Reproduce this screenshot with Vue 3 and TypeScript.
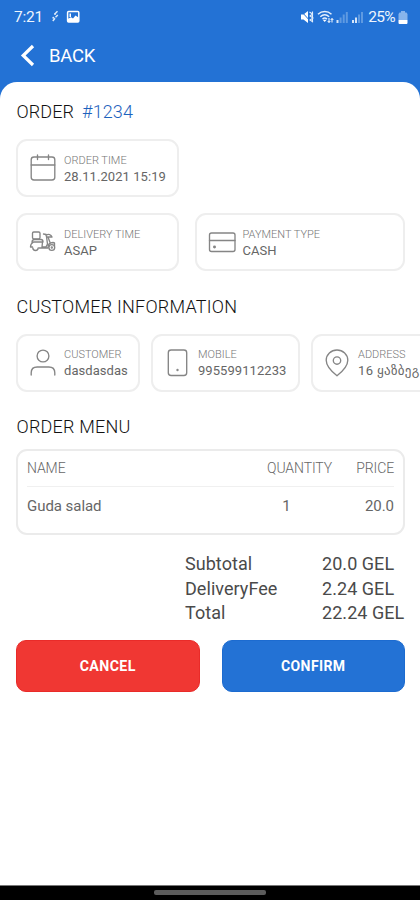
<script setup lang="ts">
interface Info {
  icon: 'calendar' | 'scooter' | 'card' | 'user' | 'phone' | 'pin'
  label: string
  value: string
  cls: string
}

const rows: { cls: string; items: Info[] }[] = [
  {
    cls: 'row-time',
    items: [{ icon: 'calendar', label: 'ORDER TIME', value: '28.11.2021 15:19', cls: 'w-time' }],
  },
  {
    cls: 'row-delivery',
    items: [
      { icon: 'scooter', label: 'DELIVERY TIME', value: 'ASAP', cls: 'w-time asap' },
      { icon: 'card', label: 'PAYMENT TYPE', value: 'CASH', cls: 'w-pay' },
    ],
  },
]

const customer: Info[] = [
  { icon: 'user', label: 'CUSTOMER', value: 'dasdasdas', cls: 'w-customer' },
  { icon: 'phone', label: 'MOBILE', value: '995599112233', cls: 'w-mobile' },
  { icon: 'pin', label: 'ADDRESS', value: '16 ყაზბეგ', cls: 'w-address' },
]

const sections = [
  { title: '', rows },
  { title: 'CUSTOMER INFORMATION', rows: [{ cls: 'row-customer', items: customer }] },
]

const totals = [
  { label: 'Subtotal', value: '20.0 GEL' },
  { label: 'DeliveryFee', value: '2.24 GEL' },
  { label: 'Total', value: '22.24 GEL' },
]
</script>

<template>
  <div class="screen">
    <header class="top">
      <div class="status">
        <span class="clock">7:21</span>
        <svg class="st-left" width="30" height="16" viewBox="0 0 30 16" fill="none">
          <path d="M7.500 2.300L5 4.800M7.800 6L5.500 8.300M5 9.300L2.800 12" stroke="#dceafa" stroke-width="1.500" />
          <circle cx="3.300" cy="8.800" r="1" fill="#dceafa" />
          <circle cx="5" cy="5" r="1" fill="#dceafa" />
          <rect x="17.600" y="2.600" width="11.200" height="10.400" rx="1" stroke="#fff" stroke-width="1.500" />
          <path d="M18 13V9.800l3-1.600 2 1.200 2.500-3 3 2V13zM19.500 4.500H21v3.500h-1.500z" fill="#fff" />
        </svg>
        <span class="grow"></span>
        <svg class="st-right" width="64" height="16" viewBox="0 0 64 16" fill="none">
          <path d="M1 5.500h2.500L8 2v12L3.500 10.500H1z" fill="#fff" />
          <path d="M1 2l11 12" stroke="#2372d5" stroke-width="1" />
          <path d="M9.500 3l3 2-2.500 2 3 2-3 2 3 2M12.500 2.500v11" stroke="#e1edfb" stroke-width="1.100" />
          <path d="M18 5.200c4-3.500 9.500-3.500 13.500 0M20.300 7.700c2.700-2.300 6.200-2.300 8.900 0M22.500 10c1.500-1.200 3-1.200 4.500 0" stroke="#e6f0fc" stroke-width="1.500" />
          <path d="M24.700 13l-2-2.300h4z" fill="#fff" />
          <path d="M29 9v4.500M27.700 12l1.300 1.500 1.300-1.500M32 13.500V9.500M30.700 11l1.300-1.500 1.300 1.500" stroke="#fff" stroke-width="1" />
          <path d="M36.500 11h2v3h-2zM52 11h2v3h-2zM55 8.500h2V14h-2z" fill="#d5e5f9" />
          <path d="M39.600 8.500h2V14h-2zM42.700 5.500h2V14h-2zM45.800 3h2v11h-2zM58 5.500h2V14h-2zM61 3h2v11h-2z" fill="#5f9ae1" />
        </svg>
        <span class="pct">25%</span>
        <svg class="battery" width="10" height="15" viewBox="0 0 10 15">
          <path d="M3 1h4v1.500h1.500L9.500 4v6h-9V4l1-1.500H3z" fill="#87b4eb" />
          <path d="M.5 10h9v3.300l-.7.700H1.200l-.7-.7z" fill="#fff" />
        </svg>
      </div>
      <div class="back">
        <svg width="16" height="24" viewBox="0 0 16 24" fill="none">
          <path d="M13 2L3.200 11.500l9.800 9.500" stroke="#fff" stroke-width="3.200" />
        </svg>
        <span>BACK</span>
      </div>
    </header>

    <main class="sheet">
      <h2 class="title first">ORDER <span class="num">#1234</span></h2>

      <section v-for="s in sections" :key="s.title">
        <h2 v-if="s.title" class="title cust">{{ s.title }}</h2>
        <div v-for="r in s.rows" :key="r.cls" class="row" :class="r.cls">
          <div v-for="i in r.items" :key="i.label" class="card" :class="i.cls">
            <svg class="icon" width="28" height="30" viewBox="0 0 28 30" fill="none" stroke="#858585" stroke-width="1.350" stroke-linecap="round" stroke-linejoin="round">
              <g v-if="i.icon === 'calendar'">
                <rect x="2.200" y="4" width="23.600" height="23" rx="2.800" />
                <path d="M2.200 12h23.600M8.500 2v4.500M19.500 2v4.500" />
              </g>
              <g v-else-if="i.icon === 'scooter'">
                <rect x="3.500" y="5" width="7.500" height="6.800" rx="1.300" />
                <path d="M3 15.500c0-1.800 1-3 2.500-3h6.500c1.500 0 2 1 2 2.500H4.500M13.500 15l-.5 5h4l1.500-3-1.300-9.500-2.700-.500M17 8.500c2.500-2 5-1 6 1.500h-4.500M19 10l2 5.500M4 15.500c-2 1-2.500 2.500-2.500 4.500h2M10 21h9c0-3.500 2-5.500 5-5.500l1.500.5v3" />
                <path d="M3.800 20.800a2.700 2.700 0 0 0 5.400 0" />
                <circle cx="22.800" cy="20.500" r="2.900" />
                <circle cx="22.800" cy="20.500" r=".5" />
              </g>
              <g v-else-if="i.icon === 'card'">
                <rect x="1.500" y="6" width="25.500" height="18.500" rx="2" />
                <path d="M1.500 13.500H27" />
                <circle cx="6.500" cy="20" r=".8" fill="#858585" />
              </g>
              <g v-else-if="i.icon === 'user'">
                <circle cx="14" cy="8" r="5.900" />
                <path d="M2.200 27v-2.200c0-3.500 2.300-5.800 6-5.800h11.600c3.700 0 6 2.300 6 5.800V27" />
              </g>
              <g v-else-if="i.icon === 'phone'">
                <rect x="4.300" y="2" width="18.400" height="25.500" rx="2.800" />
                <circle cx="13.500" cy="22" r=".5" fill="#858585" />
              </g>
              <g v-else>
                <path d="M13 27.800C7 23 2.200 18 2.200 12.200a10.800 10.200 0 0 1 21.600 0C23.800 18 19 23 13 27.800z" />
                <circle cx="13" cy="12.500" r="3.700" />
              </g>
            </svg>
            <div class="txt">
              <span class="label">{{ i.label }}</span>
              <span class="value">{{ i.value }}</span>
            </div>
          </div>
        </div>
      </section>

      <h2 class="title menu">ORDER MENU</h2>
      <div class="table">
        <div class="tr head"><span>NAME</span><span class="q">QUANTITY</span><span class="p">PRICE</span></div>
        <div class="tr body"><span>Guda salad</span><span class="q">1</span><span class="p">20.0</span></div>
      </div>

      <div class="totals">
        <div v-for="t in totals" :key="t.label" class="total">
          <span>{{ t.label }}</span><span>{{ t.value }}</span>
        </div>
      </div>

      <div class="actions">
        <button class="btn cancel">CANCEL</button>
        <button class="btn confirm">CONFIRM</button>
      </div>
    </main>
    <footer class="nav"><div class="pill"></div></footer>
  </div>
</template>

<style>
body {
  margin: 0;
  overflow: hidden;
}
</style>

<style scoped>
.screen {
  width: 420px;
  height: 900px;
  overflow: hidden;
  display: flex;
  flex-direction: column;
  background: #2372d5;
  font-family: Roboto, "Noto Sans", "DejaVu Sans", sans-serif;
  color: #333;
}
.top { height: 82px; flex: none; color: #fff; }
.status { display: flex; align-items: center; height: 34px; padding: 0 12px 0 14px; box-sizing: border-box; }
.clock { width: 36px; font-size: 15.500px; letter-spacing: -0.200px; color: #eef5fd; }
.grow { flex: 1; }
.st-right { margin-right: 4px; }
.pct { font-size: 15.500px; letter-spacing: -0.700px; color: #eef5fd; margin-right: 3px; }
.back { display: flex; align-items: center; height: 43px; padding-left: 20px; gap: 13px; font-size: 18.500px; letter-spacing: -0.300px; }
.sheet {
  flex: 1;
  background: #fff;
  border-radius: 17px 17px 0 0;
  padding: 0 0 0 16px;
  overflow: hidden;
}
.title { margin: 0; padding-left: 0.500px; font-size: 18px; line-height: 22px; font-weight: 300; color: #111; letter-spacing: 0.220px; white-space: nowrap; }
.first { padding-top: 19px; word-spacing: 3.500px; letter-spacing: 0.100px; }
.num { color: #1d62bd; }
.cust { margin-top: 25px; }
.menu { margin-top: 24px; }
.row { display: flex; gap: 16px; }
.row-time { margin-top: 16px; }
.row-delivery { margin-top: 16px; }
.row-customer { margin-top: 15.500px; gap: 10.500px; }
.card {
  flex: none;
  display: flex;
  align-items: center;
  height: 58px;
  box-sizing: border-box;
  border: 2px solid #eeeeee;
  border-radius: 11px;
  padding-left: 11px;
  background: #fff;
}
.w-time { width: 163px; }
.w-pay { width: 210px; }
.w-customer { width: 124px; }
.w-mobile { width: 149.500px; }
.w-address { width: 190px; }
.icon { flex: none; margin-right: 7px; }
.w-mobile .icon, .w-address .icon, .w-pay .icon { margin-right: 6.500px; }
.txt { display: flex; flex-direction: column; padding-top: 1px; }
.label { font-size: 11px; line-height: 15px; font-weight: 300; color: #777; white-space: nowrap; }
.value { font-size: 13px; line-height: 17px; letter-spacing: 0.060px; color: #666; white-space: nowrap; }
.w-mobile .value { letter-spacing: 0.060px; }
.w-address .value { letter-spacing: 0.350px; }
.table {
  width: 389px;
  height: 86.500px;
  box-sizing: border-box;
  margin-top: 11px;
  border: 2px solid #ebebeb;
  border-radius: 11px;
  padding: 0 9px 0 9px;
}
.tr { display: grid; grid-template-columns: 226px 79px 1fr; align-items: center; }
.head { height: 35px; border-bottom: 1px solid #f0f0f0; font-size: 14px; font-weight: 300; color: #666; letter-spacing: -0.100px; }
.head .q { margin-left: 14px; }
.body { height: 38px; font-size: 15px; letter-spacing: -0.050px; color: #666; }
.body .q { padding-right: 12px; }
.p { text-align: right; }
.q { text-align: center; }
.totals { margin: 17px 0 0 169px; }
.total { display: grid; grid-template-columns: 137px 1fr; height: 24.500px; line-height: 24.500px; font-size: 18px; letter-spacing: 0.050px; color: #4a4a4a; }
.actions { display: flex; gap: 22px; margin-top: 14px; }
.btn {
  width: 183.500px;
  height: 52px;
  border: 1px solid #e92b29;
  border-radius: 10px;
  background: #f03733;
  color: #fff;
  font: 700 14px/16px Roboto, sans-serif;
  letter-spacing: 0.400px;
  padding: 1px 0 0;
}
.cancel { font-size: 14.200px; }
.confirm { background: #2372d5; border-color: #1c6bd0; }
.nav {
  flex: none;
  height: 15px;
  box-sizing: border-box;
  border-top: 1px solid #777;
  background: #000;
  display: flex;
  justify-content: center;
}
.pill { width: 112px; height: 5px; border-radius: 2px; background: #5c5c5c; margin-top: 4px; }
</style>
